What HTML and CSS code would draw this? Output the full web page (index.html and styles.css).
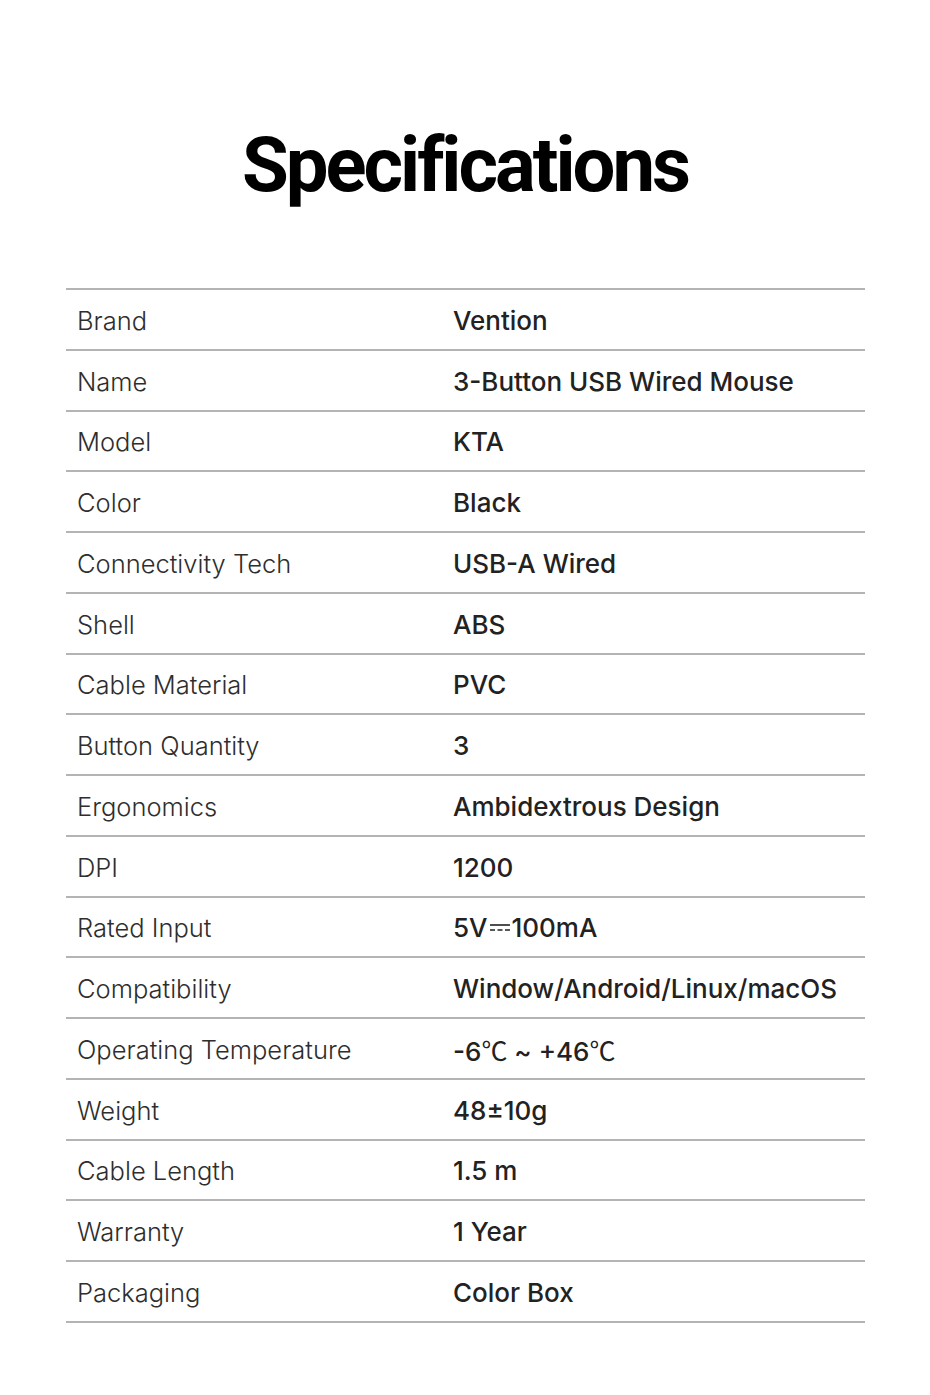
FILE: index.html
```html
<!DOCTYPE html>
<html>
<head>
<meta charset="utf-8">
<link rel="stylesheet" href="styles.css">
</head>
<body>
<div class="page">
  <h1 class="title">Specifications</h1>
  <div class="specs">
    <div class="row"><div class="label">Brand</div><div class="value">Vention</div></div>
    <div class="row"><div class="label">Name</div><div class="value">3-Button USB Wired Mouse</div></div>
    <div class="row"><div class="label">Model</div><div class="value">KTA</div></div>
    <div class="row"><div class="label">Color</div><div class="value">Black</div></div>
    <div class="row"><div class="label">Connectivity Tech</div><div class="value">USB-A Wired</div></div>
    <div class="row"><div class="label">Shell</div><div class="value">ABS</div></div>
    <div class="row"><div class="label">Cable Material</div><div class="value">PVC</div></div>
    <div class="row"><div class="label">Button Quantity</div><div class="value">3</div></div>
    <div class="row"><div class="label">Ergonomics</div><div class="value">Ambidextrous Design</div></div>
    <div class="row"><div class="label">DPI</div><div class="value">1200</div></div>
    <div class="row"><div class="label">Rated Input</div><div class="value">5V<svg class="dc" width="22" height="10" viewBox="0 0 22 10"><line x1="1" y1="2" x2="21" y2="2" stroke="#222" stroke-width="1.6"/><line x1="1" y1="7" x2="21" y2="7" stroke="#222" stroke-width="1.6" stroke-dasharray="5 2.5"/></svg>100mA</div></div>
    <div class="row"><div class="label">Compatibility</div><div class="value">Window/Android/Linux/macOS</div></div>
    <div class="row"><div class="label">Operating Temperature</div><div class="value">-6<span class="deg">℃</span> ~ +46<span class="deg">℃</span></div></div>
    <div class="row"><div class="label">Weight</div><div class="value">48±10g</div></div>
    <div class="row"><div class="label">Cable Length</div><div class="value">1.5 m</div></div>
    <div class="row"><div class="label">Warranty</div><div class="value">1 Year</div></div>
    <div class="row"><div class="label">Packaging</div><div class="value">Color Box</div></div>
  </div>
</div>
</body>
</html>
```
FILE: styles.css
```css
html, body {
  margin: 0;
  padding: 0;
  background: #ffffff;
}
.page {
  width: 930px;
  height: 1395px;
  padding-top: 120px;
  box-sizing: border-box;
  font-family: "Inter", "Noto Sans", sans-serif;
}
.title {
  margin: 0;
  text-align: center;
  font-family: "Roboto", "Inter", sans-serif;
  font-weight: 700;
  font-size: 76px;
  line-height: 90px;
  letter-spacing: -3px;
  font-variant-ligatures: none;
  color: #000;
}
.specs {
  margin: 78px 65px 0 66px;
  border-top: 2px solid #b4b4b4;
}
.row {
  display: flex;
  align-items: center;
  height: 60.76px;
  box-sizing: border-box;
  border-bottom: 2px solid #b4b4b4;
  padding-top: 2px;
}
.label {
  width: 376px;
  padding-left: 11px;
  font-weight: 300;
  font-size: 25.5px;
  color: #2e2e2e;
}
.value {
  font-weight: 500;
  font-size: 26px;
  color: #222;
  white-space: pre;
}
.dc {
  vertical-align: middle;
  margin: 0 1px;
  position: relative;
  top: -2px;
}
.deg {
  font-family: "Noto Sans CJK SC", sans-serif;
  font-weight: 400;
}
```
